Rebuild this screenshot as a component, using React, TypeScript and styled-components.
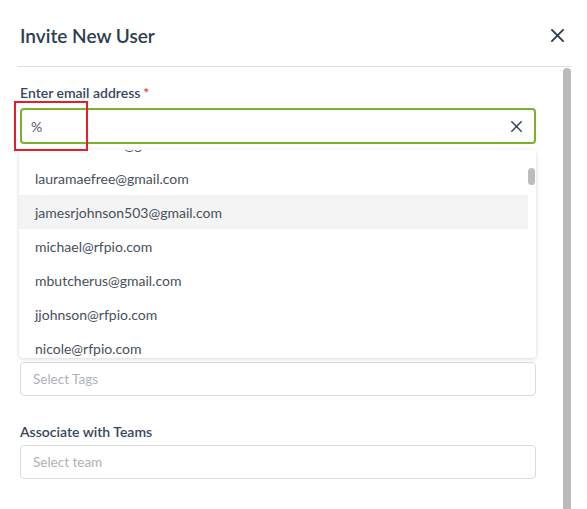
import React from "react";
import styled, {createGlobalStyle} from "styled-components";

const GlobalStyle = createGlobalStyle`
  html, body {
    margin: 0;
    padding: 0;
    background: #ffffff;
    font-family: Lato, "Open Sans", sans-serif;
    overflow: hidden;
  }
`;

const Modal = styled.div`
  width: 587px;
  height: 509px;
  background: #ffffff;
  display: flex;
  flex-direction: column;
  overflow: hidden;
`;

const Header = styled.div`
  height: 67px;
  margin: 0 16px 0 17px;
  padding: 5px 6px 0 3px;
  display: flex;
  align-items: center;
  justify-content: space-between;
  border-bottom: 1px solid #dedede;
  box-sizing: border-box;
`;

const Title = styled.h2`
  margin: 0;
  font-size: 19px;
  font-weight: 600;
  color: #2d3e50;
`;

const CloseButton = styled.button`
  border: none;
  background: none;
  padding: 0;
  width: 14px;
  height: 14px;
  display: flex;
  color: #2d3e50;
`;

const Body = styled.div`
  flex: 1;
  display: flex;
  gap: 27px;
  padding: 0 16px 0 20px;
  min-height: 0;
`;

const Form = styled.div`
  width: 516px;
  padding-top: 16px;
`;

const PageScrollbar = styled.div`
  width: 8px;
  margin-top: 1px;
  background: #bbbbbb;
  border-radius: 4px 4px 0 0;
`;

const Field = styled.div<{$gap?: number}>`
  position: relative;
  margin-bottom: ${p => p.$gap ?? 26}px;
`;

const Label = styled.div<{$tight?: boolean}>`
  font-size: 14px;
  font-weight: 600;
  color: #34475b;
  line-height: 20px;
  margin-bottom: ${p => (p.$tight ? 3 : 5)}px;
`;

const Required = styled.span`
  color: #e53935;
  margin-left: 3px;
`;

const Input = styled.div<{$active?: boolean}>`
  height: ${p => (p.$active ? 36 : 34)}px;
  box-sizing: border-box;
  border: ${p => (p.$active ? "2px solid #7cb22a" : "1px solid #d9dcdf")};
  border-radius: 4px;
  display: flex;
  align-items: center;
  justify-content: space-between;
  padding: ${p => (p.$active ? "0 12px 0 9px" : "0 12px 0 12px")};
  font-size: 13.5px;
`;

const Value = styled.span`
  color: #555c63;
  font-size: 14px;
`;

const Placeholder = styled.span`
  color: #adb3b9;
`;

const ClearIcon = styled.span`
  display: flex;
  color: #2d3e50;
`;

const Highlight = styled.div`
  position: absolute;
  left: -6px;
  top: 18px;
  width: 70px;
  height: 46px;
  border: 2.5px solid #e3202a;
  pointer-events: none;
  z-index: 3;
`;

const Dropdown = styled.div`
  position: absolute;
  left: -1px;
  top: 67px;
  width: 517px;
  height: 208px;
  background: #ffffff;
  border-radius: 4px;
  box-shadow: 0 1px 4px rgba(0, 0, 0, 0.16);
  overflow: hidden;
  z-index: 2;
`;

const OptionList = styled.ul`
  list-style: none;
  margin: -23px 8px 0 0;
  padding: 0;
`;

const Option = styled.li<{$hover?: boolean}>`
  height: 34px;
  display: flex;
  align-items: center;
  padding-left: 16px;
  font-size: 14px;
  color: #47505b;
  background: ${p => (p.$hover ? "#f4f4f4" : "transparent")};
`;

const ListThumb = styled.div`
  position: absolute;
  right: 1px;
  top: 18px;
  width: 7px;
  height: 17px;
  border-radius: 4px;
  background: #bdbdbd;
`;

const Cross = ({size, width}: {size: number; width: number}) => (
  <svg width={size} height={size} viewBox="0 0 14 14" fill="none">
    <path d="M1 1L13 13M13 1L1 13" stroke="currentColor" strokeWidth={width} strokeLinecap="round" />
  </svg>
);

const emails = [
  "davidmorrison@gmail.com",
  "lauramaefree@gmail.com",
  "jamesrjohnson503@gmail.com",
  "michael@rfpio.com",
  "mbutcherus@gmail.com",
  "jjohnson@rfpio.com",
  "nicole@rfpio.com",
];

export default function App() {
  return (
    <Modal>
      <GlobalStyle />
      <Header>
        <Title>Invite New User</Title>
        <CloseButton>
          <Cross size={13} width={2} />
        </CloseButton>
      </Header>
      <Body>
        <Form>
          <Field $gap={24}>
            <Label>
              Enter email address<Required>*</Required>
            </Label>
            <Input $active>
              <Value>%</Value>
              <ClearIcon>
                <Cross size={11} width={1.8} />
              </ClearIcon>
            </Input>
            <Highlight />
            <Dropdown>
              <OptionList>
                {emails.map((email, i) => (
                  <Option key={email} $hover={i === 2}>
                    {email}
                  </Option>
                ))}
              </OptionList>
              <ListThumb />
            </Dropdown>
          </Field>
          <Field>
            <Label>First Name</Label>
            <Input>
              <Placeholder>Enter first name</Placeholder>
            </Input>
          </Field>
          <Field $gap={25}>
            <Label>Last Name</Label>
            <Input>
              <Placeholder>Enter last name</Placeholder>
            </Input>
          </Field>
          <Field>
            <Label>Tags</Label>
            <Input>
              <Placeholder>Select Tags</Placeholder>
            </Input>
          </Field>
          <Field>
            <Label $tight>Associate with Teams</Label>
            <Input>
              <Placeholder>Select team</Placeholder>
            </Input>
          </Field>
        </Form>
        <PageScrollbar />
      </Body>
    </Modal>
  );
}
